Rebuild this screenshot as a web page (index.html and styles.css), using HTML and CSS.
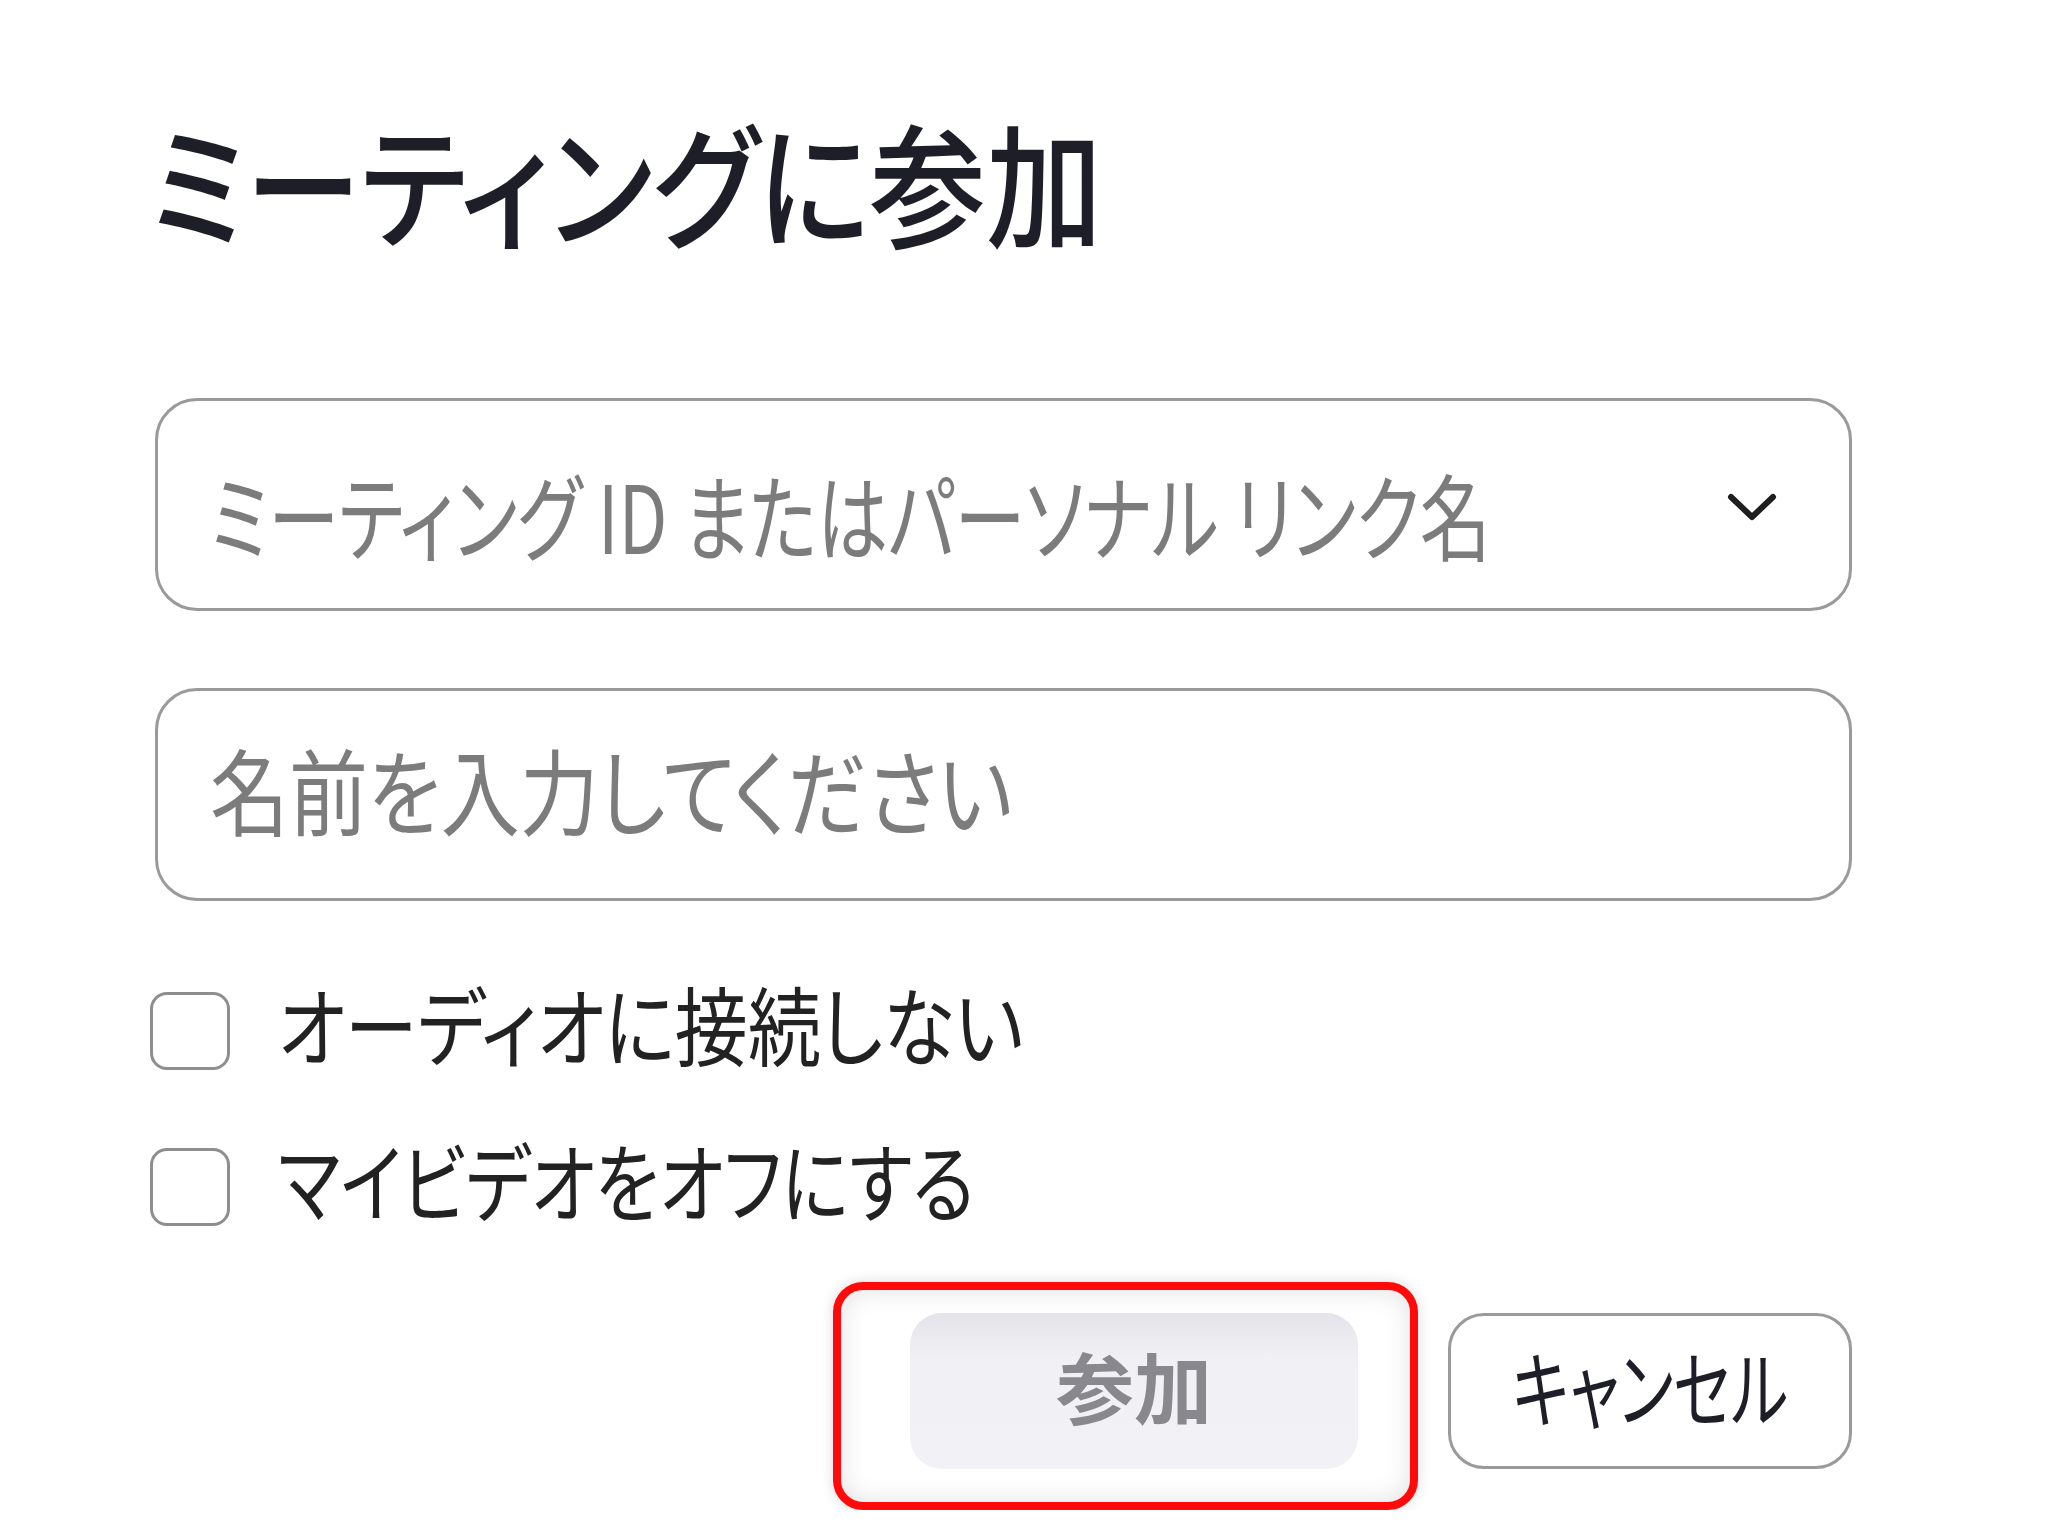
FILE: index.html
```html
<!DOCTYPE html>
<html lang="ja">
<head>
<meta charset="utf-8">
<title>ミーティングに参加</title>
<link rel="stylesheet" href="styles.css">
</head>
<body>
<div class="dialog">
  <h1 class="title"><span class="squeeze t">ミーティングに参加</span></h1>
  <div class="field select">
    <span class="placeholder p1"><span class="squeeze">ミーティング ID またはパーソナル リンク名</span></span>
    <svg class="chevron" width="52" height="32" viewBox="0 0 52 32"><polyline points="5,6 26,26 47,6" fill="none" stroke="#1e1e1e" stroke-width="6" stroke-linecap="round" stroke-linejoin="round"/></svg>
  </div>
  <div class="field">
    <span class="placeholder p2"><span class="squeeze">名前を入力してください</span></span>
  </div>
  <label class="check"><span class="box"></span><span class="label l1"><span class="squeeze">オーディオに接続しない</span></span></label>
  <label class="check"><span class="box"></span><span class="label l2"><span class="squeeze">マイビデオをオフにする</span></span></label>
  <div class="actions">
    <div class="highlight"><button class="btn join">参加</button></div>
    <button class="btn cancel"><span class="squeeze c">キャンセル</span></button>
  </div>
</div>
</body>
</html>
```
FILE: styles.css
```css
html, body {
  margin: 0;
  padding: 0;
  background: #ffffff;
}
body {
  font-family: "Noto Sans CJK JP", "Noto Sans", sans-serif;
  font-feature-settings: "palt";
  color: #222;
}
.squeeze {
  display: inline-block;
  white-space: nowrap;
  transform-origin: left center;
}
.dialog {
  width: 1702px;
  margin-left: 150px;
  padding-top: 111px;
  display: flex;
  flex-direction: column;
}
.title {
  margin: 0;
  font-size: 134px;
  line-height: 150px;
  height: 150px;
  font-weight: 500;
  color: #1e1e28;
  white-space: nowrap;
  margin-top: -6px;
  margin-bottom: 6px;
}
.t { transform: scaleX(0.868); }
.field {
  box-sizing: border-box;
  margin-left: 5px;
  width: 1697px;
  height: 213px;
  border: 3px solid #9a9a9a;
  border-radius: 42px;
  display: flex;
  align-items: center;
  padding: 0 71px 0 52px;
}
.select { margin-top: 137px; }
.field + .field { margin-top: 77px; }
.placeholder {
  flex: 1 1 0;
  min-width: 0;
  font-size: 94px;
  color: #7c7c7c;
  line-height: 1;
  white-space: nowrap;
}
.p1 { padding-top: 16px; }
.p1 .squeeze { transform: scaleX(0.757); }
.p2 { padding-bottom: 14px; }
.p2 .squeeze { transform: scaleX(0.84); }
.chevron { flex: none; margin-top: 4px; }
.check {
  display: flex;
  align-items: center;
  height: 80px;
  gap: 48px;
}
.field + .check { margin-top: 90px; }
.check + .check { margin-top: 76px; }
.box {
  box-sizing: border-box;
  width: 80px;
  height: 78px;
  border: 3px solid #8e8e8e;
  border-radius: 17px;
  flex: none;
}
.label {
  font-size: 86px;
  line-height: 1;
  color: #222;
  padding-bottom: 16px;
  white-space: nowrap;
}
.l1 .squeeze { transform: scaleX(0.85); }
.l2 .squeeze { transform: scaleX(0.81); }
.actions {
  margin-top: 55px;
  display: flex;
  justify-content: flex-end;
  align-items: flex-start;
  gap: 30px;
}
.highlight {
  box-sizing: border-box;
  width: 585px;
  height: 228px;
  border: 8px solid #ff0a0a;
  border-radius: 30px;
  padding: 23px 52px 33px 69px;
  box-shadow: 0 0 14px rgba(0,0,0,0.14), inset 0 0 26px rgba(0,0,0,0.12);
}
.btn {
  font-family: inherit;
  font-feature-settings: "palt";
  box-sizing: border-box;
  height: 156px;
  font-size: 78px;
  line-height: 1;
  padding: 0 0 12px 0;
  cursor: pointer;
}
.join {
  width: 448px;
  border: none;
  border-radius: 32px;
  background: linear-gradient(#e3e3e9, #f1f1f5 30%, #f2f2f6);
  color: #88888e;
  font-weight: 700;
}
.cancel {
  margin-top: 31px;
  width: 404px;
  border: 3px solid #9a9a9a;
  border-radius: 36px;
  background: #fff;
  color: #1e1e28;
  font-weight: 400;
  display: flex;
  align-items: center;
  justify-content: center;
}
.cancel .squeeze {
  font-size: 84px;
  transform: scaleX(0.725);
  transform-origin: center center;
}
```
